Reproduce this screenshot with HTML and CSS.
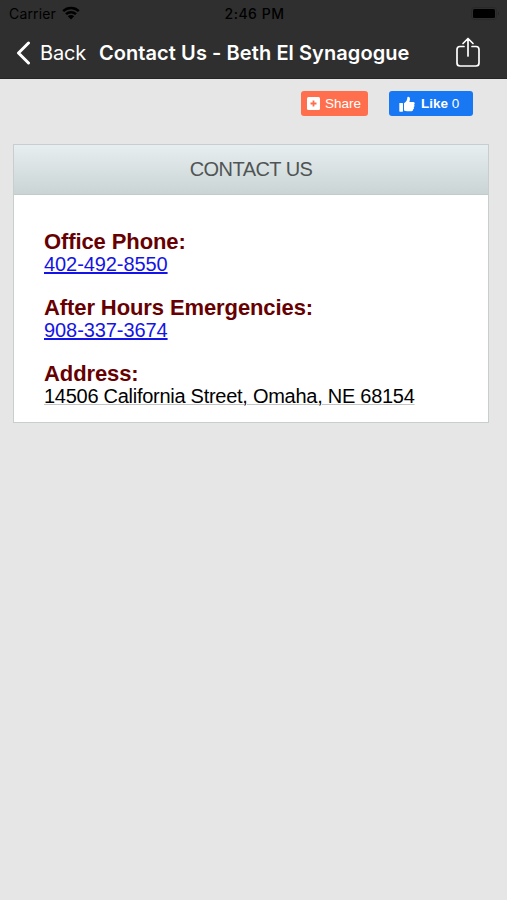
FILE: index.html
```html
<!DOCTYPE html>
<html lang="en">
<head>
    <meta charset="UTF-8">
    <meta name="viewport" content="width=device-width, initial-scale=1.0">
    <title>Contact Us - Beth El Synagogue</title>
    <link rel="stylesheet" href="styles.css">
</head>
<body>
    <header class="topbar">
        <div class="status">
            <div class="carrier">
                <span>Carrier</span>
                <svg class="wifi" viewBox="0 0 18 14" width="18" height="14">
                    <path d="M1.2 5.2a11.4 11.4 0 0 1 15.6 0M4 8.2a7.2 7.2 0 0 1 10 0" fill="none" stroke="#000" stroke-width="2.5"/>
                    <path d="M9 13.5 5.8 10.3a4.6 4.6 0 0 1 6.4 0z"/>
                </svg>
            </div>
            <span class="clock">2:46 PM</span>
            <div class="battery">
                <svg viewBox="0 0 29 13" width="29" height="13">
                    <rect x=".5" y=".5" width="25" height="12" rx="3" fill="none" stroke="#292929"/>
                    <rect x="2" y="2" width="22" height="9" rx="1.5"/>
                    <path d="M27 4.5q2 2 0 4z" fill="#242424"/>
                </svg>
            </div>
        </div>
        <nav class="nav">
            <a class="back" href="#">
                <svg viewBox="0 0 16 24" width="16" height="24">
                    <path d="M13.500 2 3.500 12l10 10" fill="none" stroke="#fff" stroke-width="3" stroke-linecap="round" stroke-linejoin="round"/>
                </svg>
                <span>Back</span>
            </a>
            <h1 class="title">Contact Us - Beth El Synagogue</h1>
            <a class="export" href="#" aria-label="Share page">
                <svg viewBox="0 0 26 32" width="26" height="32">
                    <path d="M9 9.5H5a3 3 0 0 0-3 3V26a3 3 0 0 0 3 3h16a3 3 0 0 0 3-3V12.500a3 3 0 0 0-3-3h-4M13 19V2M8 6.500l5-5 5 5" fill="none" stroke="#fff" stroke-width="1.700" stroke-linecap="round" stroke-linejoin="round"/>
                </svg>
            </a>
        </nav>
    </header>
    <main>
        <div class="social">
            <a class="btn share" href="#">
                <svg viewBox="0 0 13 13" width="13" height="13">
                    <rect width="13" height="13" rx="1.500" fill="#fff"/>
                    <path d="M6.500 3.500v6M3.500 6.500h6" stroke="#ff6f4d" stroke-width="1.800"/>
                </svg>
                <span>Share</span>
            </a>
            <a class="btn like" href="#">
                <svg viewBox="0 0 16 16" width="16" height="16" fill="#fff">
                    <rect x=".3" y="7" width="3.700" height="8.700" rx=".6"/>
                    <path d="M5 7.200C7.500 5.500 8.200 4 8.300 1.800 8.400.3 11 .3 11 3.100c0 1-.3 2-.6 3H14.400a1.400 1.400 0 0 1 .6 2.600 1.400 1.400 0 0 1-.4 2.400 1.400 1.400 0 0 1-.6 2.300c.2 1-.4 1.800-1.400 1.800H8c-1.200 0-2-.4-3-.8z"/>
                </svg>
                <span><b>Like</b> 0</span>
            </a>
        </div>
        <section class="card">
            <h2 class="card-title">CONTACT US</h2>
            <div class="card-body">
                <div class="item">
                    <h3>Office Phone:</h3>
                    <a href="tel:402-492-8550">402-492-8550</a>
                </div>
                <div class="item">
                    <h3>After Hours Emergencies:</h3>
                    <a href="tel:908-337-3674">908-337-3674</a>
                </div>
                <div class="item">
                    <h3>Address:</h3>
                    <span class="address">14506 California Street, Omaha, NE 68154</span>
                </div>
            </div>
        </section>
    </main>
</body>
</html>
```
FILE: styles.css
```css
*{
    margin: 0;
    padding: 0;
    box-sizing: border-box;
}
body{
    background-color: #e6e6e6;
    font-family: "Liberation Sans", Arial, sans-serif;
    min-height: 100vh;
}
svg{
    display: block;
}
.topbar{
    background-color: #2f2f2f;
    height: 79px;
    border-bottom: 1px solid #252525;
    font-family: Inter, sans-serif;
}
.status{
    display: grid;
    grid-template-columns: 1fr auto 1fr;
    align-items: center;
    height: 27px;
    padding: 0 7px 0 9px;
    font-size: 14px;
    color: #000;
}
.carrier{
    display: flex;
    align-items: center;
    gap: 6px;
    letter-spacing: .15px;
}
.carrier .wifi{
    margin-top: -2px;
}
.clock{
    font-weight: 500;
    font-size: 14px;
    letter-spacing: .5px;
}
.battery{
    justify-self: end;
}
.nav{
    display: flex;
    align-items: center;
    height: 51px;
    padding: 0 26px 0 15px;
    color: #fff;
}
.back{
    display: flex;
    align-items: center;
    gap: 9px;
    color: #fff;
    font-size: 20px;
    letter-spacing: -.2px;
    text-decoration: none;
}
.title{
    margin-left: 13px;
    font-size: 20px;
    font-weight: 600;
    letter-spacing: .08px;
    white-space: nowrap;
}
.export{
    margin-left: auto;
}
.social{
    display: flex;
    justify-content: flex-end;
    gap: 21px;
    padding: 12px 34px 0 0;
}
.btn{
    display: flex;
    align-items: center;
    height: 25px;
    border-radius: 3px;
    color: #fff;
    font-size: 13.5px;
    text-decoration: none;
}
.share{
    width: 67px;
    gap: 5px;
    padding-left: 6px;
    background-color: #ff6f4d;
}
.like{
    width: 84px;
    gap: 6px;
    padding-left: 10px;
    background-color: #1877f2;
}
.card{
    width: 476px;
    margin: 28px 0 0 13px;
    background-color: #fff;
    border: 1px solid #c8cece;
}
.card-title{
    height: 50px;
    line-height: 48px;
    background-image: linear-gradient(#e6eeef, #cbd4d5);
    border-bottom: 1px solid #c3caca;
    color: #505455;
    font-size: 20px;
    font-weight: normal;
    letter-spacing: -.55px;
    text-align: center;
}
.card-body{
    padding: 35px 30px 14px;
    font-size: 20px;
}
.item{
    height: 66px;
    line-height: 23px;
}
.item:last-child{
    height: 46px;
}
.item h3{
    color: #670000;
    font-size: 22px;
    line-height: 23px;
    letter-spacing: -.1px;
}
.item a{
    color: #1414e6;
    letter-spacing: -.08px;
}
.address{
    letter-spacing: -.27px;
    text-decoration: underline;
    text-decoration-color: #c4c4c4;
    text-decoration-thickness: 1px;
}
```
